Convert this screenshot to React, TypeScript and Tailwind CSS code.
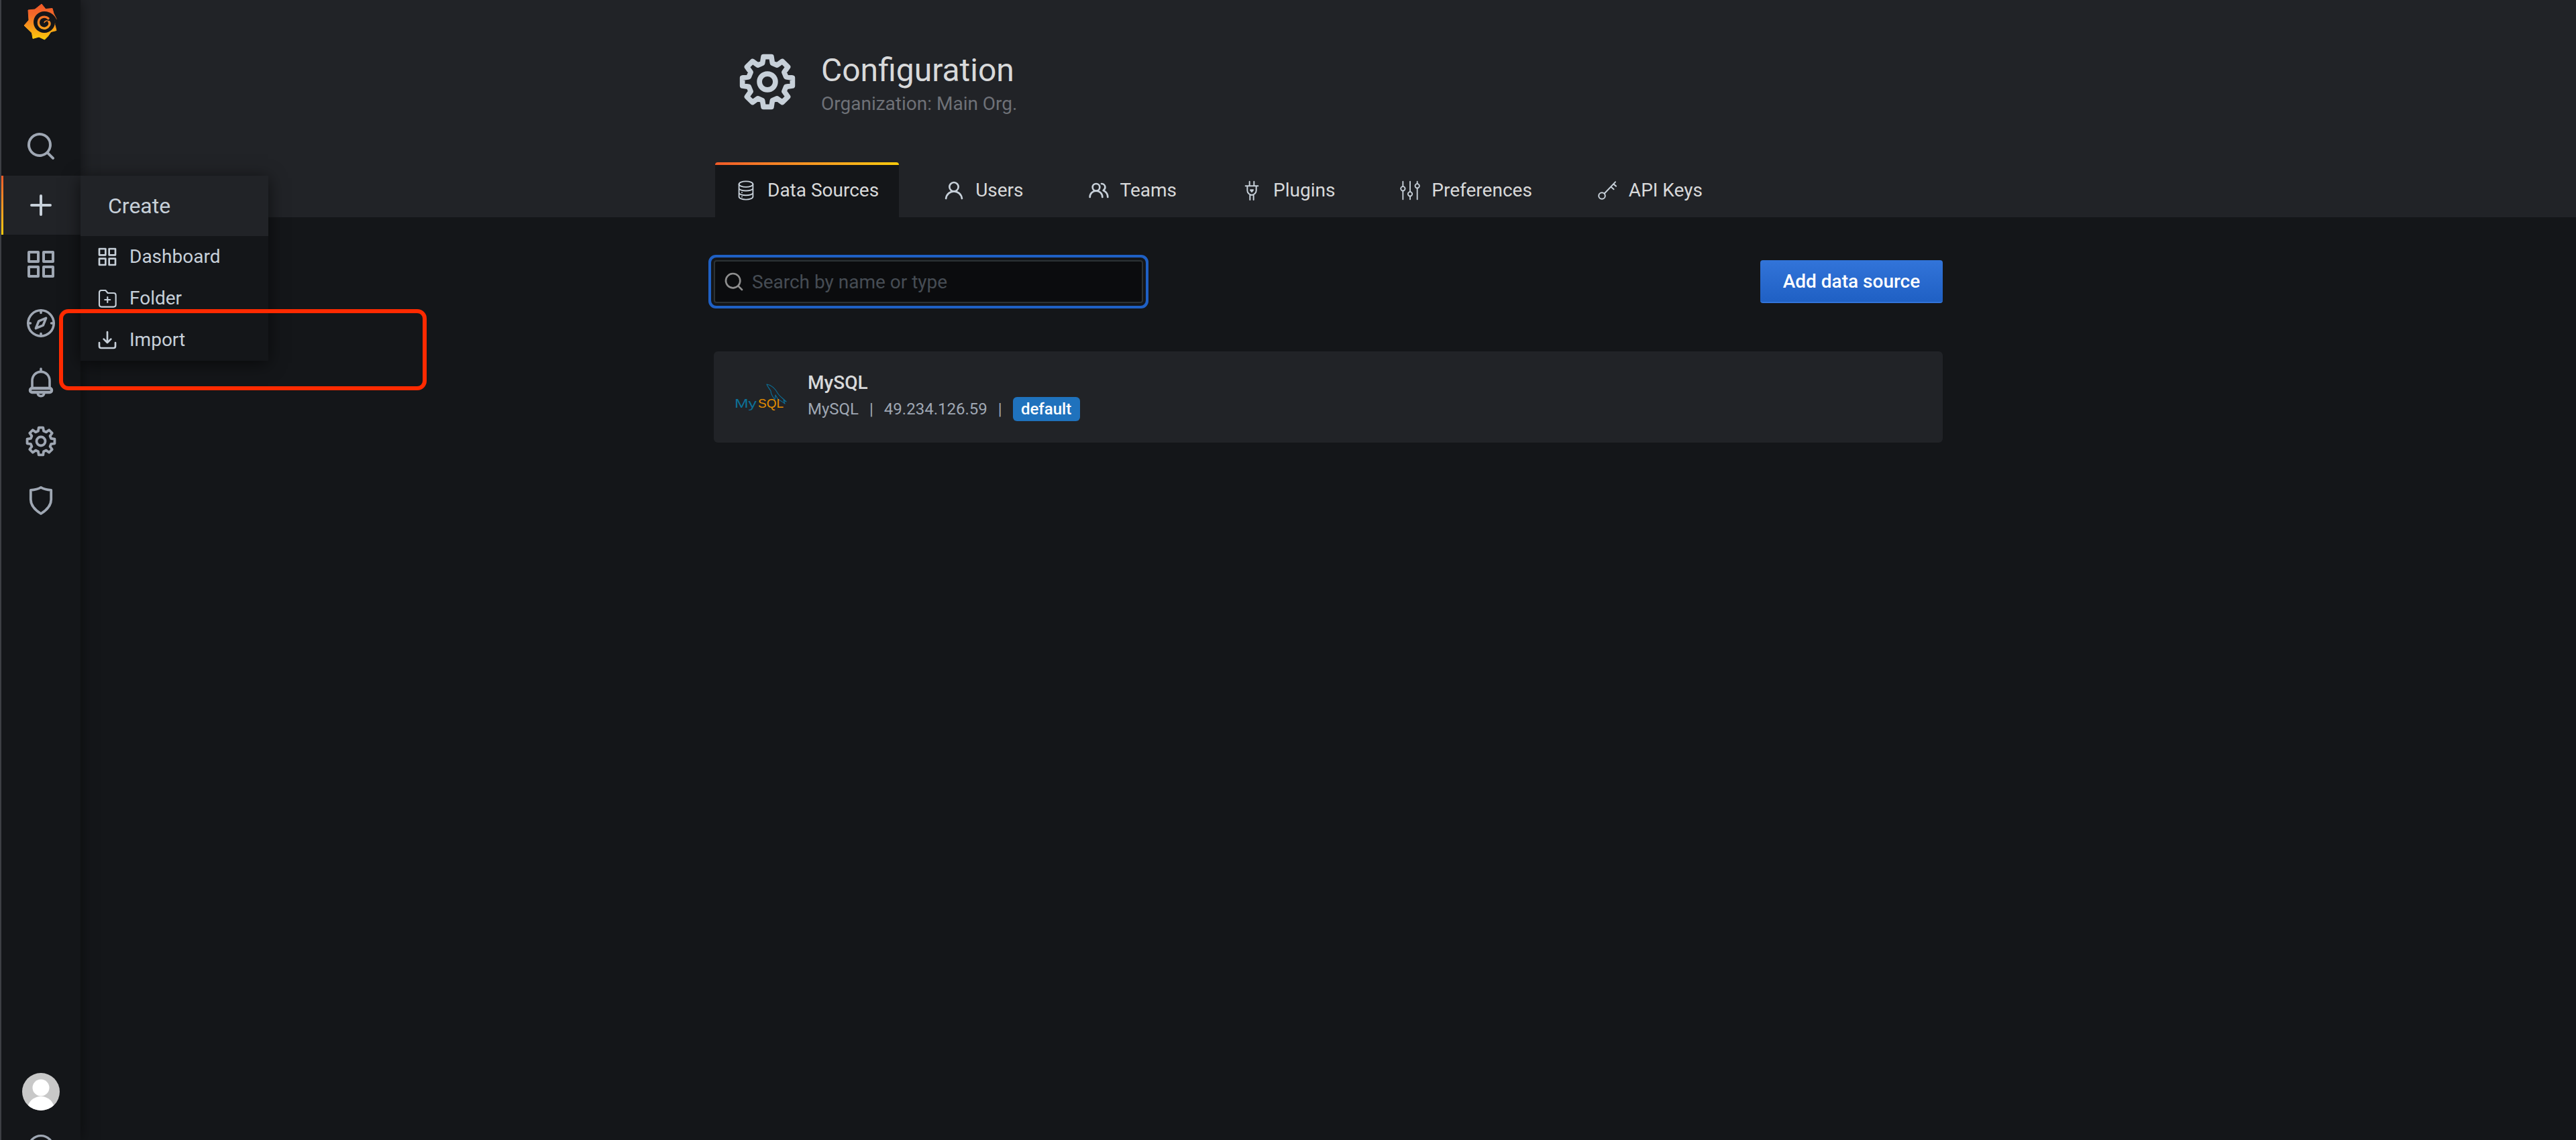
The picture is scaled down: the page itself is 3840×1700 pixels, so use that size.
import React from "react";

const SEARCH = "M21.71,20.29,18,16.61A9,9,0,1,0,16.61,18l3.68,3.68a1,1,0,0,0,1.42,0A1,1,0,0,0,21.71,20.29ZM11,18a7,7,0,1,1,7-7A7,7,0,0,1,11,18Z";
const PLUS = "M19,11H13V5a1,1,0,0,0-2,0v6H5a1,1,0,0,0,0,2h6v6a1,1,0,0,0,2,0V13h6a1,1,0,0,0,0-2Z";
const APPS = "M10,13H3a1,1,0,0,0-1,1v7a1,1,0,0,0,1,1h7a1,1,0,0,0,1-1V14A1,1,0,0,0,10,13ZM9,20H4V15H9ZM21,2H14a1,1,0,0,0-1,1v7a1,1,0,0,0,1,1h7a1,1,0,0,0,1-1V3A1,1,0,0,0,21,2ZM20,9H15V4h5Zm1,4H14a1,1,0,0,0-1,1v7a1,1,0,0,0,1,1h7a1,1,0,0,0,1-1V14A1,1,0,0,0,21,13Zm-1,7H15V15h5ZM10,2H3A1,1,0,0,0,2,3v7a1,1,0,0,0,1,1h7a1,1,0,0,0,1-1V3A1,1,0,0,0,10,2ZM9,9H4V4H9Z";
const IMPORT = "M21,14a1,1,0,0,0-1,1v4a1,1,0,0,1-1,1H5a1,1,0,0,1-1-1V15a1,1,0,0,0-2,0v4a3,3,0,0,0,3,3H19a3,3,0,0,0,3-3V15A1,1,0,0,0,21,14Zm-9.71,1.71a1,1,0,0,0,.33.21.94.94,0,0,0,.76,0,1,1,0,0,0,.33-.21l4-4a1,1,0,0,0-1.42-1.42L13,12.59V3a1,1,0,0,0-2,0v9.59l-2.29-2.3a1,1,0,1,0-1.42,1.42Z";
const USER = "M15.71,12.71a6,6,0,1,0-7.42,0,10,10,0,0,0-6.22,8.18,1,1,0,0,0,2,.22,8,8,0,0,1,15.9,0,1,1,0,0,0,1,.89h.11a1,1,0,0,0,.88-1.1A10,10,0,0,0,15.71,12.71ZM12,12a4,4,0,1,1,4-4A4,4,0,0,1,12,12Z";
const USERS = "M12.3,12.22A4.92,4.92,0,0,0,14,8.5a5,5,0,0,0-10,0,4.92,4.92,0,0,0,1.7,3.72A8,8,0,0,0,1,19.5a1,1,0,0,0,2,0,6,6,0,0,1,12,0,1,1,0,0,0,2,0A8,8,0,0,0,12.3,12.22ZM9,11.5a3,3,0,1,1,3-3A3,3,0,0,1,9,11.5Zm9.74.32A5,5,0,0,0,15,3.5a1,1,0,0,0,0,2,3,3,0,0,1,3,3,3,3,0,0,1-1.5,2.59,1,1,0,0,0-.5.84,1,1,0,0,0,.45.86l.39.26.13.07a7,7,0,0,1,4,6.38,1,1,0,0,0,2,0A9,9,0,0,0,18.74,11.82Z";

function gearPath(rOut: number, rIn: number) {
  const pts: string[] = [];
  for (let i = 0; i < 8; i++) {
    const a = (i * 45 - 90) * (Math.PI / 180);
    const w1 = (9 * Math.PI) / 180;
    const w2 = (15 * Math.PI) / 180;
    const p = (r: number, t: number) => `${(12 + r * Math.cos(t)).toFixed(2)} ${(12 + r * Math.sin(t)).toFixed(2)}`;
    pts.push(`${i === 0 ? "M" : "L"}${p(rIn, a - w2)}`);
    pts.push(`L${p(rOut, a - w1)}`);
    pts.push(`L${p(rOut, a + w1)}`);
    pts.push(`L${p(rIn, a + w2)}`);
  }
  return pts.join(" ") + " Z";
}
const GEAR = gearPath(10.8, 8.2);

function Fill({ d, className }: { d: string; className: string }) {
  return (
    <svg viewBox="0 0 24 24" fill="currentColor" className={className}>
      <path d={d} />
    </svg>
  );
}

function Stroke({ children, className, w = 2 }: { children: React.ReactNode; className: string; w?: number }) {
  return (
    <svg viewBox="0 0 24 24" fill="none" stroke="currentColor" strokeWidth={w} strokeLinecap="round" strokeLinejoin="round" className={className}>
      {children}
    </svg>
  );
}

function Gear({ className, w = 2 }: { className: string; w?: number }) {
  return (
    <Stroke className={className} w={w}>
      <path d={GEAR} />
      <circle cx="12" cy="12" r="3.4" />
    </Stroke>
  );
}

function Logo() {
  return (
    <svg viewBox="0 0 60 60" className="h-[60px] w-[60px]">
      <defs>
        <linearGradient id="gf" x1="0" y1="0" x2="0" y2="1">
          <stop offset="0" stopColor="#f05a28" />
          <stop offset="0.3" stopColor="#f4692a" />
          <stop offset="1" stopColor="#fbca0a" />
        </linearGradient>
        <linearGradient id="gs" gradientUnits="userSpaceOnUse" x1="0" y1="22" x2="0" y2="46">
          <stop offset="0" stopColor="#f26a28" />
          <stop offset="1" stopColor="#f9a91a" />
        </linearGradient>
      </defs>
      <g transform="translate(0 -3)">
        <path
          d="M31 6 L37 13.5 L47 12.5 L49 20 L53 28 L51 37 L53 45.5 L45 47.5 L40.5 54 L35.5 59 L27 55 L18 57.5 L16.5 49 L5 38 L12 30 L11 15 L21 14 Z"
          fill="url(#gf)"
          stroke="url(#gf)"
          strokeLinejoin="round"
        />
        <circle cx="35" cy="33" r="16" fill="#141619" />
        <path d="M35 17 C 45 17 53 24 55 34 L 51.5 38 C 51.5 27 45 17 35 17 Z" fill="#141619" />
        <path d="M41 27.5 C 37 23.5 28 24.5 26.5 32 C 25.5 38.5 31 43.5 37 42 C 42 40.5 44.5 35.5 42 32.5" fill="none" stroke="url(#gs)" strokeWidth="3.4" strokeLinecap="round" />
        <path d="M42 32.5 C 40.5 30 36 30.5 35 33.5" fill="none" stroke="url(#gs)" strokeWidth="1.4" strokeLinecap="round" />
      </g>
    </svg>
  );
}

function MySqlLogo() {
  return (
    <svg viewBox="0 0 80 40" className="h-[40px] w-[80px] shrink-0">
      <path
        d="M49 1 C 56 2 62 8 65 14 C 68 19 73 22 78 27 L 74 25 L 76 30 C 72 27 68 24 66 24 L 62 17 L 61 24 C 58 20 55 16 55 11 C 53 8 50 4 49 1 Z"
        fill="none"
        stroke="#0d6c93"
        strokeWidth="1.2"
        strokeLinejoin="round"
      />
      <text x="1" y="36" fontFamily="Liberation Sans, sans-serif" fontSize="18" fill="#0d7197" textLength="33" lengthAdjust="spacingAndGlyphs">
        My
      </text>
      <text x="36" y="36" fontFamily="Liberation Sans, sans-serif" fontSize="18" fill="#e48e00" textLength="38" lengthAdjust="spacingAndGlyphs">
        SQL
      </text>
    </svg>
  );
}

const tabIcon = "-ml-[2px] h-[32px] w-[32px] shrink-0 text-[#c7d0d9]";

const tabs: { label: string; icon: React.ReactNode }[] = [
  {
    label: "Users",
    icon: <Fill d={USER} className={tabIcon} />,
  },
  {
    label: "Teams",
    icon: <Fill d={USERS} className={tabIcon} />,
  },
  {
    label: "Plugins",
    icon: (
      <Stroke className={tabIcon} w={1.5}>
        <path d="M9.5 2V7M14.5 2V7M5 7H19M7 7V12C7 15 9.5 17 12 17C14.5 17 17 15 17 12V7M10 17V22.5M14 17V22.5" />
        <path d="M10.5 11.5H13.5L12 13.5Z" />
      </Stroke>
    ),
  },
  {
    label: "Preferences",
    icon: (
      <Stroke className={tabIcon} w={1.4}>
        <path d="M4 2V7.5M4 12.5V22M12 2V13.5M12 18.5V22M20 2V4.5M20 9.5V22" />
        <circle cx="4" cy="10" r="2.4" />
        <circle cx="12" cy="16" r="2.4" />
        <circle cx="20" cy="7" r="2.4" />
      </Stroke>
    ),
  },
  {
    label: "API Keys",
    icon: (
      <Stroke className={tabIcon} w={1.5}>
        <circle cx="6" cy="18" r="3.6" />
        <path d="M8.8 15.4L21 2.5M16 7.8L19.2 10.6M18.8 4.8L21.8 7.2" />
      </Stroke>
    ),
  },
];

const navIcon = "text-[#9fa7b3]";

function NavRow({ children }: { children: React.ReactNode }) {
  return <div className={`flex h-[88px] items-center justify-center ${navIcon}`}>{children}</div>;
}

function MenuItem({ icon, label }: { icon: React.ReactNode; label: string }) {
  return (
    <div className="flex h-[62px] items-center gap-[17px] pl-[24px] text-[28px] text-[#c7d0d9]">
      {icon}
      <span>{label}</span>
    </div>
  );
}

export default function App() {
  return (
    <div className="relative flex h-[1700px] w-[3840px] overflow-hidden bg-[#141619] font-['Roboto',sans-serif] text-[28px] text-[#d8d9da]">
      <div className="relative z-30 h-full w-[2px] shrink-0 bg-[#3d3f44]" />

      <nav className="relative z-20 flex h-full w-[118px] shrink-0 flex-col justify-between bg-[#141619] shadow-[0_0_20px_rgba(0,0,0,0.5)]">
        <div className="flex flex-col">
          <div className="flex h-[174px] items-start justify-center pt-[3px]">
            <Logo />
          </div>
          <NavRow>
            <Fill d={SEARCH} className="h-[48px] w-[48px]" />
          </NavRow>
          <div className="relative flex h-[88px] items-center justify-center bg-[#212327] text-[#c7d0d9]">
            <div className="absolute left-0 top-0 h-full w-[3px] bg-linear-to-b from-[#f05a28] to-[#fbca0a]" />
            <Fill d={PLUS} className="h-[48px] w-[48px]" />
            <div className="absolute left-full top-0 w-[280px] shadow-[0_4px_24px_rgba(0,0,0,0.6)]">
              <div className="flex h-[90px] items-center bg-[#212327] pl-[41px] text-[32px] text-[#c7d0d9]">Create</div>
              <div className="h-[186px] bg-[#141619]">
                <MenuItem icon={<Fill d={APPS} className="h-[32px] w-[32px]" />} label="Dashboard" />
                <MenuItem
                  icon={
                    <Stroke className="h-[32px] w-[32px]" w={1.6}>
                      <path d="M3 5.5C3 4 4 3 5.5 3H10L12.5 6H19C20.5 6 21.5 7 21.5 8.5V19C21.5 20.5 20.5 21.5 19 21.5H5.5C4 21.5 3 20.5 3 19Z" />
                      <path d="M12.2 10.5V16.5M9.2 13.5H15.2" />
                    </Stroke>
                  }
                  label="Folder"
                />
                <MenuItem icon={<Fill d={IMPORT} className="h-[32px] w-[32px]" />} label="Import" />
              </div>
            </div>
          </div>
          <NavRow>
            <Fill d={APPS} className="h-[48px] w-[48px]" />
          </NavRow>
          <NavRow>
            <Stroke className="h-[48px] w-[48px]" w={1.8}>
              <circle cx="12" cy="12" r="9.6" />
              <path d="M15.8 8.2L13.6 13.6L8.2 15.8L10.4 10.4Z" />
              <path d="M12 2.4V4.2M12 19.8V21.6M2.4 12H4.2M19.8 12H21.6" />
            </Stroke>
          </NavRow>
          <NavRow>
            <Stroke className="h-[48px] w-[48px]" w={1.8}>
              <path d="M12 2V4M5.5 16.5V11C5.5 7.2 8.2 4.2 12 4.2C15.8 4.2 18.5 7.2 18.5 11V16.5" />
              <rect x="4" y="16.5" width="16" height="3" rx="1.4" strokeWidth="2.2" />
              <path d="M9.5 19.8C9.7 21.6 10.8 22.3 12 22.3C13.2 22.3 14.3 21.6 14.5 19.8" />
            </Stroke>
          </NavRow>
          <NavRow>
            <Gear className="h-[46px] w-[46px]" w={2} />
          </NavRow>
          <NavRow>
            <Stroke className="h-[48px] w-[48px]" w={1.9}>
              <path d="M12 2.4C10 3.6 7.2 4.2 4.4 4.4V11.5C4.4 16 8 19.5 12 22C16 19.5 19.6 16 19.6 11.5V4.4C16.8 4.2 14 3.6 12 2.4Z" />
            </Stroke>
          </NavRow>
        </div>

        <div className="mb-[-56px] flex flex-col">
          <NavRow>
            <svg viewBox="0 0 56 56" className="h-[56px] w-[56px]">
              <defs>
                <clipPath id="av">
                  <circle cx="28" cy="28" r="28" />
                </clipPath>
              </defs>
              <g clipPath="url(#av)">
                <rect width="56" height="56" fill="#c8c8c8" />
                <circle cx="28" cy="22" r="12.5" fill="#fff" />
                <ellipse cx="28" cy="54" rx="20" ry="19" fill="#fff" />
              </g>
            </svg>
          </NavRow>
          <div className={`-mt-[4px] flex h-[88px] items-center justify-center ${navIcon}`}>
            <Stroke className="h-[44px] w-[44px]" w={1.8}>
              <circle cx="12" cy="12" r="10" />
              <path d="M9.5 9.5C9.5 8 10.7 7 12 7C13.4 7 14.5 8 14.5 9.4C14.5 11.5 12 11.5 12 13.5M12 16.8V17" />
            </Stroke>
          </div>
        </div>
      </nav>

      <main className="flex h-full min-w-0 flex-1 flex-col">
        <header className="h-[324px] shrink-0 bg-[#212327]">
          <div className="mx-auto flex h-full w-[1832px] flex-col">
            <div className="flex items-start pl-[40px] pt-[75px]">
              <Gear className="mt-[5px] h-[84px] w-[84px] shrink-0 -ml-[2px] text-[#c7d0d9]" w={2.2} />
              <div className="ml-[38px]">
                <div className="text-[48px] leading-[60px] text-[#d8d9da]">Configuration</div>
                <div className="text-[28px] leading-[40px] text-[#6e7177]">Organization: Main Org.</div>
              </div>
            </div>
            <div className="mt-auto ml-[2px] flex h-[82px] gap-[34px]">
              <div className="relative mr-[2px] flex items-center gap-[16px] rounded-t-[4px] bg-[#141619] pl-[32px] pr-[30px] pt-[2px]">
                <div className="absolute left-0 right-0 top-0 h-[4px] rounded-t-[4px] bg-linear-to-r from-[#f05a28] to-[#fbca0a]" />
                <Stroke className={tabIcon} w={1.4}>
                  <ellipse cx="12" cy="5" rx="7.8" ry="3.2" />
                  <path d="M4.2 5V19C4.2 21 8 22.2 12 22.2C16 22.2 19.8 21 19.8 19V5M4.2 10C5.5 12 9 12.4 12 12.4C15 12.4 18.5 12 19.8 10M4.2 15C5.5 17 9 17.4 12 17.4C15 17.4 18.5 17 19.8 15" />
                  <path d="M7.5 14.2V14.3M7.5 19V19.1" />
                </Stroke>
                <span>Data Sources</span>
              </div>
              {tabs.map((t) => (
                <div key={t.label} className="flex items-center gap-[16px] px-[32px] pt-[2px]">
                  {t.icon}
                  <span>{t.label}</span>
                </div>
              ))}
            </div>
          </div>
        </header>

        <section className="mx-auto w-[1832px] pt-[64px]">
          <div className="flex h-[64px] items-center justify-between">
            <div className="relative h-[64px] w-[640px]">
              <Fill d={SEARCH} className="absolute left-[14px] top-[16px] h-[32px] w-[32px] text-[#8e8e8e]" />
              <input
                readOnly
                placeholder="Search by name or type"
                className="h-full w-full rounded-[4px] border-2 border-[#2c3235] bg-[#0b0c0e] pl-[55px] text-[28px] text-[#c7d0d9] shadow-[0_0_0_4px_#141619,0_0_0_8px_#1f60c4] outline-none placeholder:text-[#464c54]"
              />
            </div>
            <button className="h-[64px] w-[272px] rounded-[4px] border-b-2 border-[#3274d9] bg-linear-to-b from-[#3274d9] to-[#1f60c4] pt-[2px] text-[28px] font-medium text-white">
              Add data source
            </button>
          </div>

          <div className="mt-[72px] flex h-[136px] items-start gap-[30px] rounded-[6px] bg-[#212327] pl-[30px]">
            <div className="mt-[48px]">
              <MySqlLogo />
            </div>
            <div className="flex flex-col pt-[27px]">
              <div className="text-[28px] font-medium leading-[40px] text-[#d8d9da]">MySQL</div>
              <div className="mt-[1px] flex h-[36px] items-center gap-[16px] text-[24px] text-[#9fa7b3]">
                <span>MySQL</span>
                <span>|</span>
                <span>49.234.126.59</span>
                <span>|</span>
                <span className="flex h-[36px] w-[100px] items-center justify-center rounded-[6px] bg-[#1f72bd] font-medium text-white">default</span>
              </div>
            </div>
          </div>
        </section>
      </main>

      <div className="absolute left-[88px] top-[461px] z-40 h-[121px] w-[548px] rounded-[14px] border-[6px] border-[#ff2a00]" />
    </div>
  );
}
